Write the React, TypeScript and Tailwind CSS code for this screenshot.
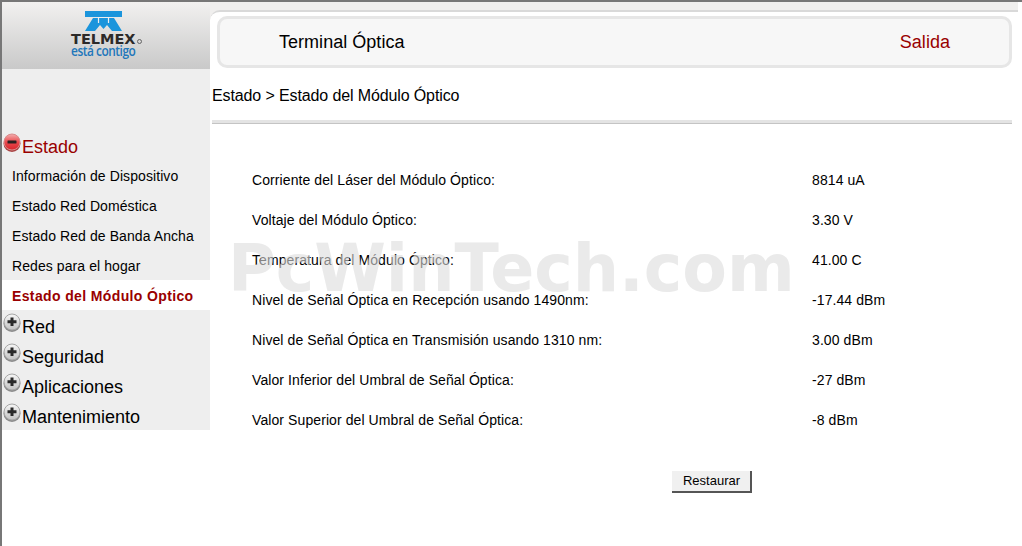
const estadoItems = [
  'Información de Dispositivo',
  'Estado Red Doméstica',
  'Estado Red de Banda Ancha',
  'Redes para el hogar',
]

const otherMenus = ['Red', 'Seguridad', 'Aplicaciones', 'Mantenimiento']

const rows = [
  ['Corriente del Láser del Módulo Óptico:', '8814 uA'],
  ['Voltaje del Módulo Óptico:', '3.30 V'],
  ['Temperatura del Módulo Óptico:', '41.00 C'],
  ['Nivel de Señal Óptica en Recepción usando 1490nm:', '-17.44 dBm'],
  ['Nivel de Señal Óptica en Transmisión usando 1310 nm:', '3.00 dBm'],
  ['Valor Inferior del Umbral de Señal Óptica:', '-27 dBm'],
  ['Valor Superior del Umbral de Señal Óptica:', '-8 dBm'],
]

function TelmexLogo() {
  return (
    <div className="flex w-[71px] flex-col">
      <svg width="37" height="20" viewBox="0 0 37 20" className="ml-[14px] block">
        <path fill="#1b95dc" d="M0 0H37V6H0Z" />
        <path fill="#1b95dc" d="M8 7L0 20H10L15 14L18.5 18L22 14L27 20H37L29 7Z" />
        <path fill="none" stroke="#eeeeee" strokeWidth="1.2" d="M13.5 6V12M23.5 6V12M13.5 6.5H23.5" />
      </svg>
      <div className="mt-[3px] flex h-[11px] items-start font-['DejaVu_Sans',sans-serif] text-[14.5px] leading-[11px] font-bold text-[#2c2a29]">
        TELMEX
        <span className="mt-[5px] ml-[1px] h-[5px] w-[5px] rounded-full border border-[#666666]" />
      </div>
      <div className="h-[12px] origin-left scale-x-[0.85] font-['Open_Sans',sans-serif] text-[14px] leading-[12px] font-semibold tracking-[-0.55px] whitespace-nowrap text-[#2277bb]">
        está contigo
      </div>
    </div>
  )
}

function ToggleIcon({ open }: { open: boolean }) {
  const id = open ? 'toggle-red' : 'toggle-gray'
  return (
    <svg width="18" height="19" viewBox="0 0 18 19" className="block shrink-0">
      <defs>
        <linearGradient id={id} x1="0" y1="0" x2="0" y2="1">
          <stop offset="0" stopColor={open ? '#f3b0b0' : '#f7f7f7'} />
          <stop offset="0.5" stopColor={open ? '#ea4a4e' : '#dcdcdc'} />
          <stop offset="1" stopColor={open ? '#d8262c' : '#c4c4c4'} />
        </linearGradient>
      </defs>
      <ellipse cx="9" cy="10.5" rx="8.5" ry="8.5" fill={open ? '#a94444' : '#8c8c8c'} />
      <circle
        cx="9"
        cy="9"
        r="8"
        fill={`url(#${id})`}
        stroke={open ? '#d98a8a' : '#a6a6a6'}
        strokeWidth="1"
      />
      {open ? (
        <rect x="4.5" y="7.5" width="9" height="3" rx="0.5" fill="#2a2020" />
      ) : (
        <path fill="#2a2a2a" d="M7.5 4.5H10.5V7.2H13.5V10.2H10.5V13H7.5V10.2H4.5V7.2H7.5Z" />
      )}
    </svg>
  )
}

function MenuHead({ label, open }: { label: string; open?: boolean }) {
  return (
    <div className={`flex items-start ${open ? 'h-[29px]' : 'h-[30px]'}`}>
      <div className={`ml-[1px] ${open ? 'mt-[2px]' : 'mt-[3px]'}`}>
        <ToggleIcon open={!!open} />
      </div>
      <span
        className={`ml-[1px] text-[18px] leading-[20px] ${open ? 'mt-[6px] text-[#990000]' : 'mt-[7px] text-black'}`}
      >
        {label}
      </span>
    </div>
  )
}

export default function App() {
  return (
    <div className="relative h-[546px] w-[1022px] overflow-hidden border-t-2 border-l-2 border-[#777777] bg-white font-['Liberation_Sans',Arial,sans-serif] text-black">
      <div className="flex">
        {/* left column */}
        <aside className="w-[208px] shrink-0">
          <div className="flex h-[67px] justify-center bg-gradient-to-b from-[#f2f1f0] to-[#c9c9c9] pt-[9px] pl-[1px]">
            <TelmexLogo />
          </div>
          <nav className="h-[361px] bg-[#eeeeee] pt-[62px]">
            <MenuHead label="Estado" open />
            {estadoItems.map((item) => (
              <div key={item} className="flex h-[30px] items-center pt-[2px] pl-[10px] text-[14px] tracking-[0.08px]">
                {item}
              </div>
            ))}
            <div className="flex h-[30px] items-center bg-white pt-[2px] pl-[10px] text-[14px] font-bold tracking-[0.37px] text-[#990000]">
              Estado del Módulo Óptico
            </div>
            {otherMenus.map((m) => (
              <MenuHead key={m} label={m} />
            ))}
          </nav>
        </aside>

        {/* right column */}
        <main className="mr-[4px] min-w-0 flex-1 bg-[#f0efee]">
          <div className="mt-[8px] h-[543px] rounded-tl-[10px] border-t-2 border-[#d9d9d9] bg-white pl-[2px]">
            <div className="mt-[4px] mr-[6px] ml-[5px] flex h-[52px] items-center justify-between rounded-[10px] border-[3px] border-[#e6e6e6] bg-[#f7f7f7] pr-[59px] pl-[59px] text-[18px] tracking-[0.03px]">
              <span>Terminal Óptica</span>
              <span className="text-[#990000]">Salida</span>
            </div>
            <div className="flex h-[52px] items-center pt-[3px] text-[16px] tracking-[-0.12px]">
              Estado &gt; Estado del Módulo Óptico
            </div>
            <div className="mr-[6px] h-[4px] border-b border-[#c4c4c4] bg-[#e4e4e4]" />
            <div className="pt-[37px] pr-[6px] pl-[40px]">
              {rows.map(([label, value]) => (
                <div key={label} className="flex h-[40px] items-center pb-[2px] text-[14px] tracking-[0.09px]">
                  <span className="w-[560px] shrink-0">{label}</span>
                  <span>{value}</span>
                </div>
              ))}
            </div>
            <div className="mt-[27px] ml-[460px]">
              <button className="h-[22px] w-[80px] border-r-2 border-b-2 border-[#555555] bg-[#f0f0f0] pl-[1px] text-[13px] leading-[18px]">
                Restaurar
              </button>
            </div>
          </div>
        </main>
      </div>

      {/* watermark over the content */}
      <div className="pointer-events-none absolute top-[229px] left-[226px] font-['DejaVu_Sans',sans-serif] text-[65px] leading-[75px] font-bold whitespace-nowrap text-[#dddddd] opacity-60">
        PcWinTech.com
      </div>
    </div>
  )
}
